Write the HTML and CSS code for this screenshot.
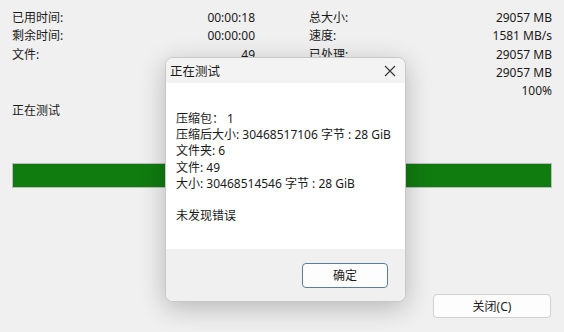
FILE: index.html
```html
<!DOCTYPE html>
<html>
<head>
  <link rel="stylesheet" href="styles.css">
</head>
<body>
  <div class="window">
    <div class="stats">
      <div class="col">
        <div class="row"><span>已用时间:</span><span>00:00:18</span></div>
        <div class="row"><span>剩余时间:</span><span>00:00:00</span></div>
        <div class="row"><span>文件:</span><span>49</span></div>
      </div>
      <div class="col">
        <div class="row"><span>总大小:</span><span>29057 MB</span></div>
        <div class="row"><span>速度:</span><span>1581 MB/s</span></div>
        <div class="row"><span>已处理:</span><span>29057 MB</span></div>
        <div class="row"><span></span><span>29057 MB</span></div>
        <div class="row"><span></span><span>100%</span></div>
      </div>
    </div>
    <div class="status">正在测试</div>
    <div class="bar"><div class="fill"></div></div>
    <div class="actions">
      <button class="btn close-btn">关闭(C)</button>
    </div>
  </div>

  <div class="dialog">
    <div class="dialog-title">
      <span>正在测试</span>
      <svg class="x" width="12" height="12" viewBox="0 0 12 12">
        <path d="M1 1 L11 11 M11 1 L1 11" stroke="#333" stroke-width="1.1" fill="none"/>
      </svg>
    </div>
    <div class="dialog-body">
      <div>压缩包：&nbsp;1</div>
      <div>压缩后大小: 30468517106 字节 : 28 GiB</div>
      <div>文件夹: 6</div>
      <div>文件: 49</div>
      <div>大小: 30468514546 字节 : 28 GiB</div>
      <div class="blank"></div>
      <div>未发现错误</div>
    </div>
    <div class="dialog-footer">
      <button class="btn ok-btn">确定</button>
    </div>
  </div>
</body>
</html>
```

FILE: styles.css
```css
body {
  margin: 0;
  padding: 0;
  background: #f0f0f0;
  font-family: "Noto Sans", "Noto Sans CJK SC", sans-serif;
  font-size: 12px;
  color: #1a1a1a;
}

.window {
  width: 564px;
  height: 332px;
  padding: 9px 12px 0;
  box-sizing: border-box;
}

.stats {
  display: grid;
  grid-template-columns: 243px 243px;
  column-gap: 54px;
}

.row {
  display: flex;
  justify-content: space-between;
  height: 18.3px;
  line-height: 18px;
}

.status {
  margin-top: 2px;
  line-height: 18px;
}

.bar {
  margin-top: 43px;
  height: 25px;
  border: 1px solid #bcbcbc;
  background: #e6e6e6;
  box-sizing: border-box;
}

.fill {
  height: 100%;
  width: 100%;
  background: #107c10;
}

.actions {
  display: flex;
  justify-content: flex-end;
  margin-top: 106px;
  padding-right: 1px;
}

.btn {
  font-family: inherit;
  font-size: 12px;
  color: #1a1a1a;
  background: #fdfdfd;
  border: 1px solid #d0d0d0;
  border-radius: 4px;
  height: 24px;
  padding: 0;
}

.close-btn {
  width: 118px;
}

.dialog {
  position: absolute;
  left: 165px;
  top: 57px;
  width: 241px;
  height: 245px;
  display: flex;
  flex-direction: column;
  background: #fff;
  border: 1px solid #c8c8c8;
  border-radius: 8px;
  box-sizing: border-box;
  overflow: hidden;
  box-shadow: 0 6px 26px rgba(0, 0, 0, 0.24);
}

.dialog-title {
  height: 25px;
  background: #f3f3f3;
  display: flex;
  align-items: center;
  justify-content: space-between;
  padding: 0 9px 0 4px;
  font-size: 12.5px;
}

.dialog-body {
  flex: 1;
  padding: 28px 0 0 10px;
  line-height: 16.2px;
}

.blank {
  height: 16px;
}

.dialog-footer {
  height: 52px;
  background: #f0f0f0;
  display: flex;
  align-items: center;
  justify-content: flex-end;
  padding-right: 17px;
}

.ok-btn {
  width: 86px;
  height: 25px;
  border: 1px solid #5a7d99;
  background: #fdfdfd;
}
```
